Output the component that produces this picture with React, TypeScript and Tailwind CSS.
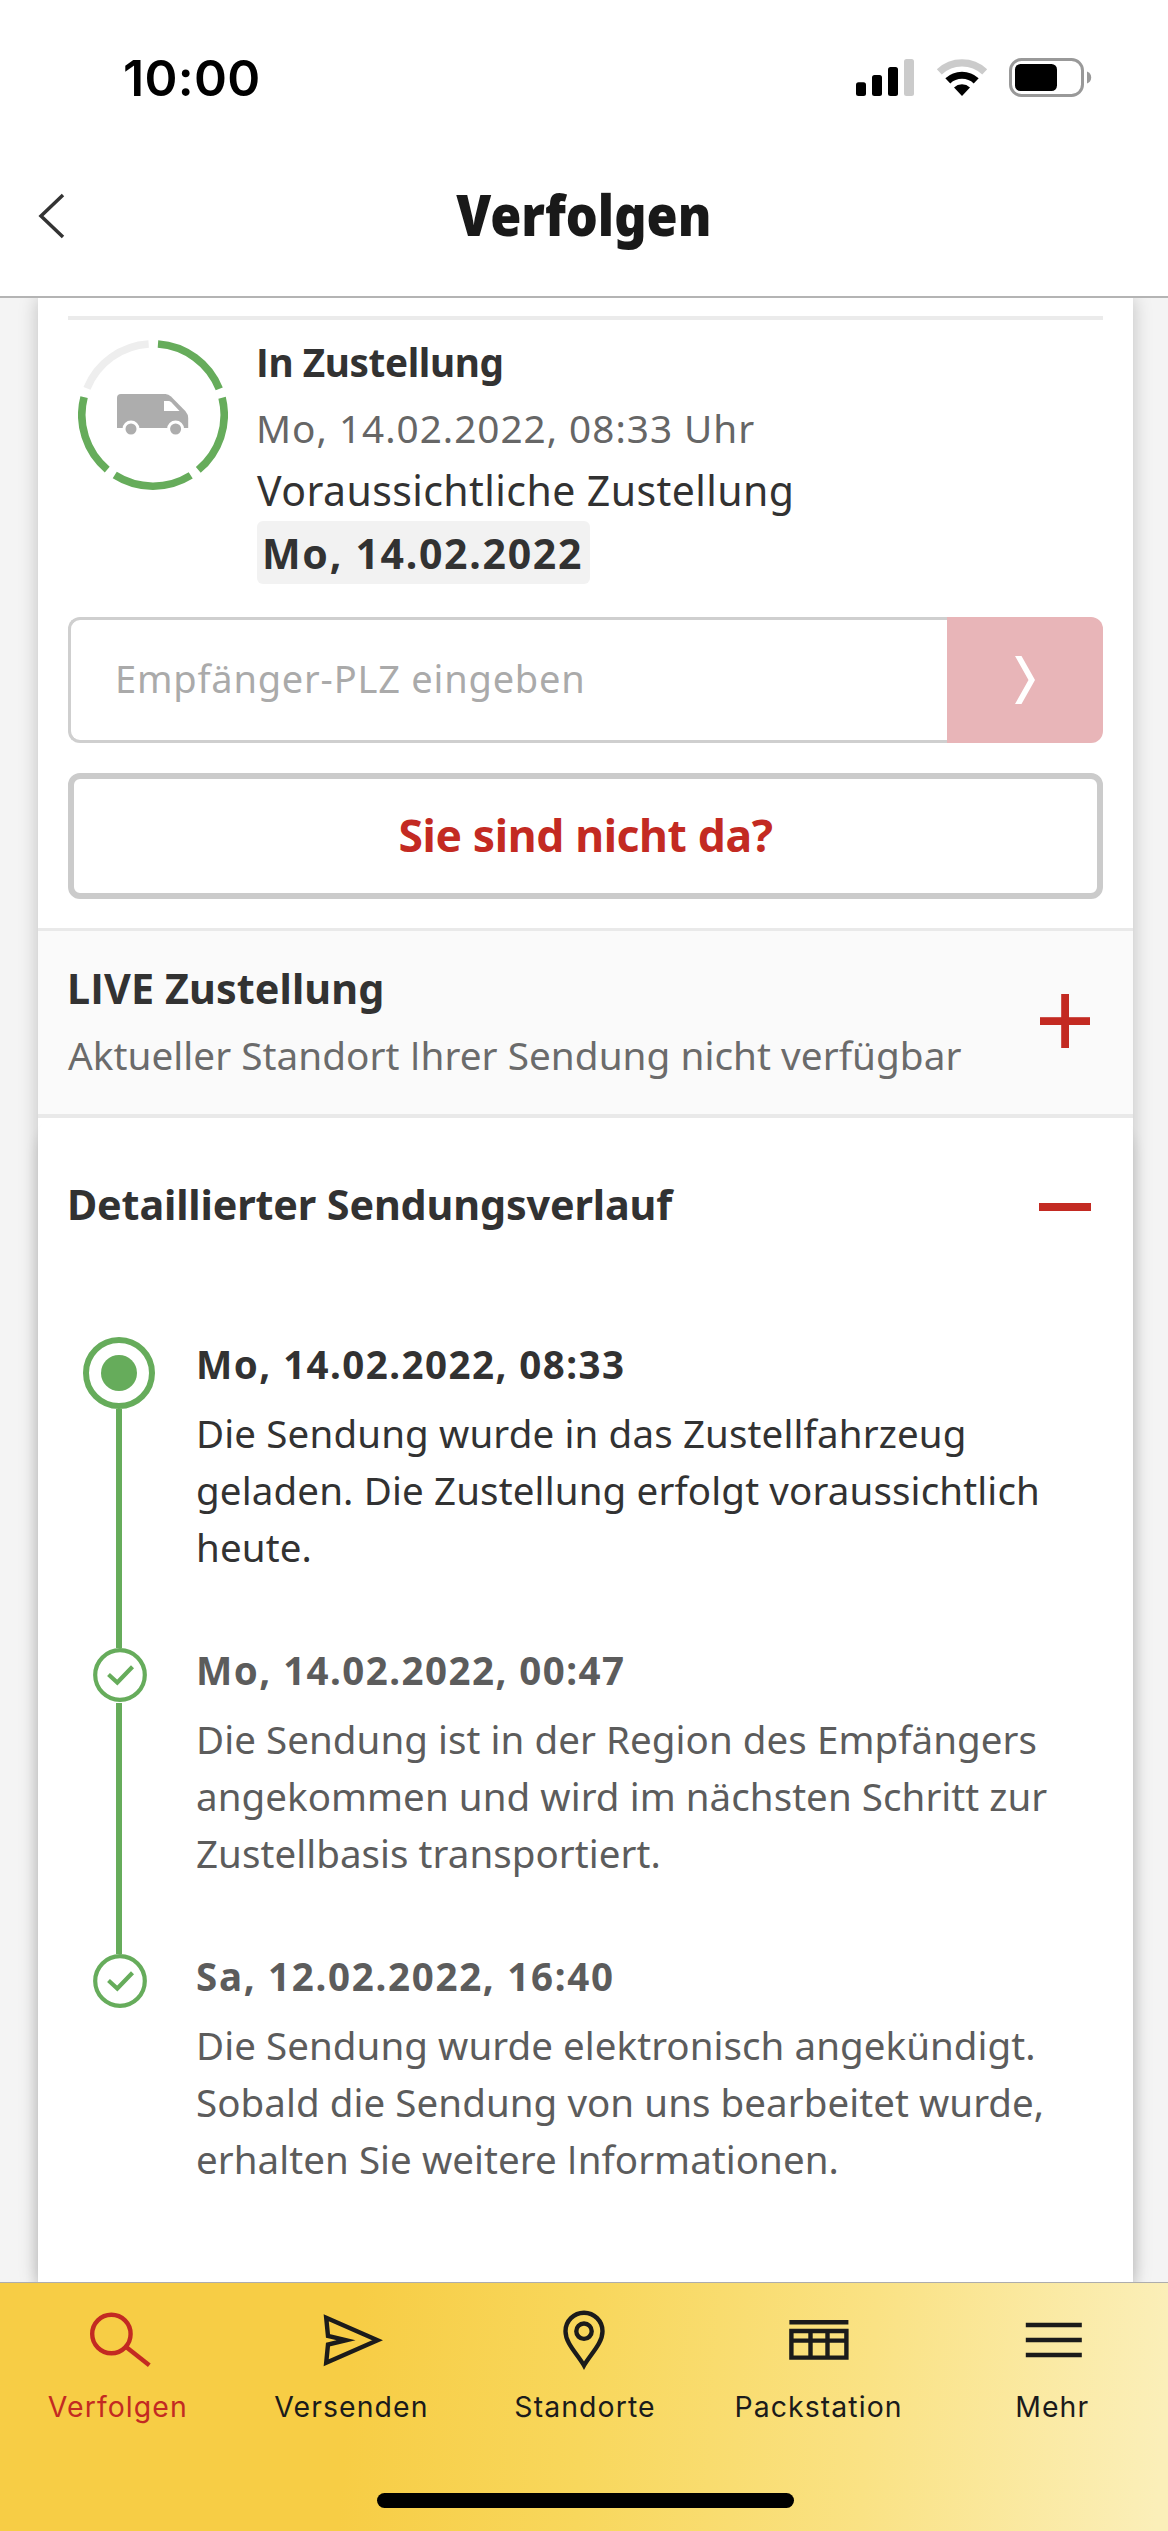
import React from 'react';

function StatusBar() {
  return (
    <div className="flex h-[120px] justify-between pt-12 pl-[123px] pr-[76px] text-black">
      <span className="font-['Inter',sans-serif] text-[50px] leading-[60px] font-semibold tracking-[0.3px]">10:00</span>
      <div className="flex pt-[10px]">
        <svg width="59" height="39" viewBox="0 0 59 39">
          <rect x="0" y="24.3" width="10" height="13.7" rx="2.5" />
          <rect x="16" y="17" width="10" height="21" rx="2.5" />
          <rect x="32" y="9" width="10" height="29" rx="2.5" />
          <rect x="48" y="1" width="10" height="37" rx="2.5" fill="#cbcbcb" />
        </svg>
        <svg className="ml-[21px]" width="52" height="39" viewBox="-26 -38 52 39">
          <path d="M-22.7 -24.1A33.2 33.2 0 0 1 22.7 -24.1" fill="none" stroke="#cbcbcb" strokeWidth="7.2" />
          <path d="M-14.2 -15.1A20.7 20.7 0 0 1 14.2 -15.1" fill="none" stroke="#000" strokeWidth="7.2" />
          <path d="M0 0L-8 -8.6A11.8 11.8 0 0 1 8 -8.6Z" />
        </svg>
        <svg className="ml-[21px]" width="83" height="39" viewBox="0 0 83 39">
          <rect x="1.5" y="1.5" width="72" height="36" rx="11" fill="none" stroke="#999" strokeWidth="3" />
          <rect x="6" y="6" width="42" height="27" rx="5.5" />
          <path d="M78 13.5c2.8 1 4.2 3.3 4.2 6s-1.4 5-4.2 6z" fill="#999" />
        </svg>
      </div>
    </div>
  );
}

function Header() {
  return (
    <header className="h-[298px] shrink-0 border-b-2 border-[#b4b4b4] bg-white">
      <StatusBar />
      <div className="grid grid-cols-[1fr_auto_1fr] pt-[58px]">
        <svg className="mt-[14px] ml-[36px]" width="32" height="48" viewBox="0 0 32 48" fill="none" stroke="#333" strokeWidth="3.5">
          <path d="M27 3L5 24L27 45" />
        </svg>
        <h1 className="scale-x-90 text-[56px] leading-[72px] font-black text-[#191919]">Verfolgen</h1>
        <span />
      </div>
    </header>
  );
}

function arc(k: number) {
  const point = (deg: number) => {
    const a = (deg * Math.PI) / 180;
    return `${75 + 71.2 * Math.sin(a)} ${75 - 71.2 * Math.cos(a)}`;
  };
  return `M${point(72 * k + 4)}A71.2 71.2 0 0 1 ${point(72 * k + 68.5)}`;
}

function ProgressRing() {
  return (
    <svg className="mt-5 ml-[10px] shrink-0" width="150" height="150" viewBox="0 0 150 150">
      {[0, 1, 2, 3, 4].map((k) => (
        <path key={k} d={arc(k)} fill="none" stroke={k === 4 ? '#eeeeee' : '#66ac5b'} strokeWidth="7.6" />
      ))}
      <path
        d="M43 54H87.5Q90.5 54 93 56.5L107.3 71Q110.2 74.5 110.2 78V88H39V58Q39 54 43 54Z"
        fill="#adadad"
      />
      <path d="M86 61H90.5Q92 61 93.3 62.3L101.5 71H86Z" fill="#fff" />
      <path d="M44.5 89a8.5 8.5 0 0 1 17 0zM89.1 89a8.5 8.5 0 0 1 17 0z" fill="#fff" />
      <circle cx="53" cy="89" r="5.5" fill="#adadad" />
      <circle cx="97.6" cy="89" r="5.5" fill="#adadad" />
    </svg>
  );
}

function Caps({ children }: { children: string }) {
  return (
    <>
      {children.split(/(I)/).map((part, i) =>
        part === 'I' ? <span key={i} className="font-['Open_Sans',sans-serif]">I</span> : part,
      )}
    </>
  );
}

function Summary() {
  return (
    <section className="px-[30px] pt-[18px] pb-[29px]">
      <div className="h-1 bg-[#ebebeb]" />
      <div className="flex">
        <ProgressRing />
        <div className="ml-[28px] flex flex-col items-start pt-3">
          <p className="text-[38.7px] leading-[60px] font-bold tracking-[-0.4px]"><Caps>In Zustellung</Caps></p>
          <p className="mt-[6px] text-[38.7px] leading-[60px] tracking-[1px] text-[#666]">Mo, 14.02.2022, 08:33 Uhr</p>
          <p className="mt-[2px] ml-px text-[41px] leading-[60px] tracking-[0.42px]">Voraussichtliche Zustellung</p>
          <p className="mt-px ml-px h-[63px] w-[333px] rounded-[6px] bg-[#f2f2f2] pl-[5px] text-[41px] leading-[64px] font-bold tracking-[1.7px] whitespace-nowrap">
            Mo, 14.02.2022
          </p>
        </div>
      </div>
      <div className="mt-[33px] flex h-[126px]">
        <input
          className="min-w-0 flex-1 rounded-l-xl border-[3px] border-r-0 border-[#cfcfcf] pb-1 pl-[44px] text-[38px] tracking-[0.8px] placeholder:text-[#aaa] placeholder:opacity-100"
          placeholder="Empfänger-PLZ eingeben"
        />
        <button className="flex w-[156px] items-center justify-center rounded-r-xl bg-[#e8b5b8]">
          <svg width="22" height="48" viewBox="0 0 22 48">
            <path d="M1 0H7.5L21 24L7.5 48H1L14.5 24Z" fill="#fff" />
          </svg>
        </button>
      </div>
      <button className="mt-[30px] block h-[126px] w-full rounded-xl border-[6px] border-[#cbcbcb] bg-white pb-[3px] text-center text-[44.4px] leading-[108px] font-bold tracking-[-0.35px] text-[#c32a22]">
        Sie sind nicht da?
      </button>
    </section>
  );
}

function LiveDelivery() {
  return (
    <section className="flex h-[190px] justify-between border-t-[3px] border-b-4 border-[#e9e9e9] bg-[#fafafa] pt-[27px] pr-[42px] pl-[30px]">
      <div>
        <h2 className="-ml-px text-[41.3px] leading-[60px] font-bold tracking-[0.1px]"><Caps>LIVE Zustellung</Caps></h2>
        <p className="mt-[7px] text-[38.7px] leading-[60px] tracking-[0.04px] text-[#6b6b6b]">
          <Caps>Aktueller Standort Ihrer Sendung nicht verfügbar</Caps>
        </p>
      </div>
      <svg className="mt-9" width="52" height="54" viewBox="0 0 52 54" fill="#c32a22">
        <rect x="1" y="23.2" width="50" height="7.8" />
        <rect x="22.2" y="0" width="7.8" height="54" />
      </svg>
    </section>
  );
}

const EVENTS = [
  {
    date: 'Mo, 14.02.2022, 08:33',
    lines: ['Die Sendung wurde in das Zustellfahrzeug', 'geladen. Die Zustellung erfolgt voraussichtlich', 'heute.'],
    color: 'text-[#323232]',
    dateSpacing: 'tracking-[1.45px]',
    spacing: 'tracking-[0.14px]',
  },
  {
    date: 'Mo, 14.02.2022, 00:47',
    lines: ['Die Sendung ist in der Region des Empfängers', 'angekommen und wird im nächsten Schritt zur', 'Zustellbasis transportiert.'],
    color: 'text-[#5c5c5c]',
    dateSpacing: 'tracking-[1.45px]',
    spacing: 'tracking-[0.06px]',
  },
  {
    date: 'Sa, 12.02.2022, 16:40',
    lines: ['Die Sendung wurde elektronisch angekündigt.', 'Sobald die Sendung von uns bearbeitet wurde,', 'erhalten Sie weitere Informationen.'],
    color: 'text-[#5c5c5c]',
    dateSpacing: 'tracking-[1.7px]',
    spacing: 'tracking-[0.06px]',
  },
];

function Check() {
  return (
    <svg className="ml-[2px] shrink-0" width="54" height="54" viewBox="0 0 54 54" fill="none" stroke="#66ac5b" strokeWidth="4.2">
      <circle cx="27" cy="27" r="24.8" />
      <path d="M15.5 26.5L24.3 34.5L39.5 18.8" />
    </svg>
  );
}

function History() {
  return (
    <section className="flex-1 rounded-t-[18px] bg-white pt-14 shadow-[0_14px_14px_rgba(0,0,0,0.12)]">
      <div className="flex h-[60px] justify-between pr-[42px] pl-[29px]">
        <h2 className="text-[41.3px] leading-[60px] font-bold tracking-[-0.14px]">Detaillierter Sendungsverlauf</h2>
        <div className="mt-[29px] h-2 w-[52px] bg-[#c32a22]" />
      </div>
      <div className="flex pt-[102px] pl-[45px]">
        <div className="mt-px flex w-[72px] flex-col items-center">
          <svg className="shrink-0" width="72" height="72" viewBox="0 0 72 72" fill="#66ac5b">
            <circle cx="36" cy="36" r="33" fill="none" stroke="#66ac5b" strokeWidth="6" />
            <circle cx="36" cy="36" r="18" />
          </svg>
          <div className="h-[239px] w-[6px] bg-[#66ac5b]" />
          <Check />
          <div className="mt-px h-[251px] w-[6px] bg-[#66ac5b]" />
          <Check />
        </div>
        <div className="ml-[41px]">
          {EVENTS.map((e) => (
            <article key={e.date} className={`h-[306px] text-[38.5px] leading-[57px] ${e.color}`}>
              <h3 className={`font-bold ${e.dateSpacing}`}>{e.date}</h3>
              <div className={`mt-3 ${e.spacing}`}>
                {e.lines.map((l) => (
                  <p key={l} className="whitespace-nowrap"><Caps>{l}</Caps></p>
                ))}
              </div>
            </article>
          ))}
        </div>
      </div>
    </section>
  );
}

const TABS = [
  {
    label: 'Verfolgen',
    icon: (
      <>
        <circle cx="34.4" cy="26" r="19.2" />
        <path d="M48.5 38.5L72.3 57.3" />
      </>
    ),
  },
  {
    label: 'Versenden',
    icon: <path d="M16.2 9.7L67.5 32.2L16.2 54.7L18 36.5L36 32.2L18 28Z" strokeMiterlimit="10" />,
  },
  {
    label: 'Standorte',
    icon: (
      <>
        <path d="M40 57.5C33.5 46 21.5 35.5 21.5 23.2A18.5 18.5 0 0 1 58.5 23.2C58.5 35.5 46.5 46 40 57.5Z" />
        <circle cx="40" cy="23.2" r="7.7" />
      </>
    ),
  },
  {
    label: 'Packstation',
    icon: <path d="M11.4 14.2H70.4M13.4 23H68.4V49.6H13.4ZM13.4 32.6H68.4M32.5 23V49.6M49.5 23V49.6" />,
  },
  { label: 'Mehr', icon: <path d="M14.8 17H70.8M14.8 32H70.8M14.8 47H70.8" /> },
];

function TabBar() {
  return (
    <nav className="flex h-[249px] shrink-0 flex-col items-center border-t border-[#adadad] bg-[linear-gradient(94deg,#f7cd45_0%,#f7cd45_30%,#f8d75c_50%,#fae284_74%,#fbefb9_99%)]">
      <div className="grid w-full grid-cols-5 pt-[25px]">
        {TABS.map((t, i) => (
          <div key={t.label} className={`flex flex-col items-center ${i === 0 ? 'text-[#c32a22]' : 'text-[#1b1b1b]'}`}>
            <svg width="80" height="64" viewBox="0 0 80 64" fill="none" stroke="currentColor" strokeWidth="4.4">
              {t.icon}
            </svg>
            <span className="mt-[15px] pl-[2px] font-['Inter',sans-serif] text-[28.4px] leading-[40px] tracking-[1.1px]">{t.label}</span>
          </div>
        ))}
      </div>
      <div className="mt-[66px] ml-[3px] h-[15px] w-[417px] rounded-full bg-black" />
    </nav>
  );
}

export default function App() {
  return (
    <div className="flex h-[2531px] w-[1168px] flex-col overflow-hidden bg-[#f4f4f4] font-['Noto_Sans',sans-serif] text-[#323232]">
      <Header />
      <main className="flex min-h-0 flex-1 overflow-hidden pr-[35px] pl-[38px]">
        <div className="flex flex-1 flex-col bg-white shadow-[0_0_18px_rgba(0,0,0,0.22)]">
          <Summary />
          <LiveDelivery />
          <History />
        </div>
      </main>
      <TabBar />
    </div>
  );
}
